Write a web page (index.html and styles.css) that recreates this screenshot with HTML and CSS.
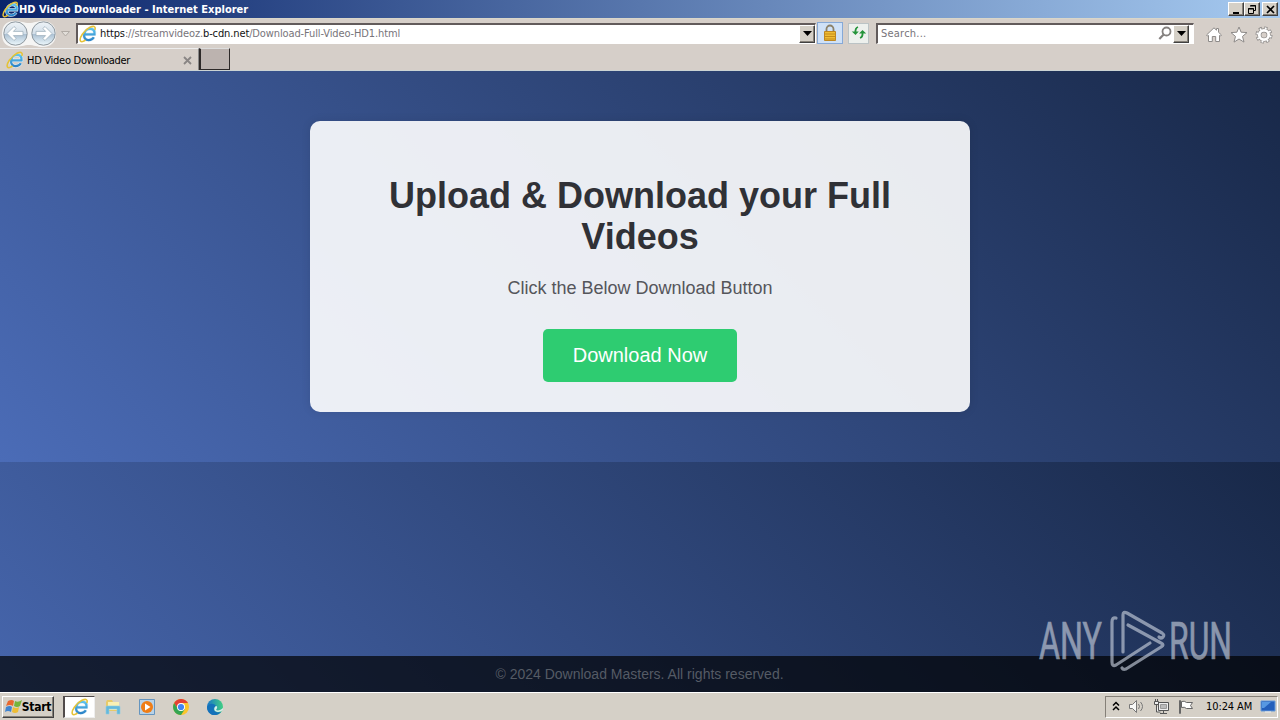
FILE: index.html
```html
<!DOCTYPE html>
<html lang="en"><head><meta charset="utf-8"><title>HD Video Downloader</title><link rel="stylesheet" href="styles.css"></head>
<body>
<svg class="defs" width="0" height="0" aria-hidden="true"><defs>
<linearGradient id="blue" x2="0" y2="1"><stop stop-color="#5cc3ee"/><stop offset="1" stop-color="#2c83c8"/></linearGradient>
<linearGradient id="nav" x2="0" y2="1"><stop stop-color="#eef3f7"/><stop offset=".5" stop-color="#d3dfe9"/><stop offset=".52" stop-color="#a9bfd2"/><stop offset="1" stop-color="#edf8fc"/></linearGradient>
<linearGradient id="edge" x2="1"><stop stop-color="#1976c8"/><stop offset="1" stop-color="#41cf83"/></linearGradient>
<symbol id="ie" viewBox="0 0 18 18"><g transform="translate(1.800 0) skewX(-8)"><path d="M5 9.300H15C15 5.900 13 3.900 10 3.900S4.700 6.200 4.700 9.500s2.100 5.600 5.300 5.600c2.300 0 4-1.100 4.800-2.800" fill="none" stroke="#e4f1f7" stroke-width="3.400"/><path d="M5 9.300H15C15 5.900 13 3.900 10 3.900S4.700 6.200 4.700 9.500s2.100 5.600 5.300 5.600c2.300 0 4-1.100 4.800-2.800" fill="none" stroke="url(#blue)" stroke-width="2.300"/></g><path d="M15.800 5C17 1.300 15 .5 11 2.300 5 5.300-.2 13.200 1.500 16c.9 1.200 3 .5 5-1" fill="none" stroke="#e5c238" stroke-width="1.600"/></symbol>
</defs></svg>
<header class="titlebar"><svg class="title-ie"><use href="#ie"/></svg><span class="title">HD Video Downloader - Internet Explorer</span>
<div class="window-buttons"><span class="bevel wb"><svg width="13" height="11"><path d="M3 8h6v2H3z"/></svg></span><span class="bevel wb"><svg width="13" height="11" fill="none" stroke="#000"><path d="M4.500 1.500h5v5h-2M4 2h6M2.500 4.500h5v5h-5zM2 5h6"/></svg></span><span class="bevel wb close"><svg width="13" height="11"><path d="M3 2l7 7M10 2L3 9" stroke="#000" stroke-width="1.700"/></svg></span></div></header>
<nav class="toolbar">
<svg class="nav-buttons" width="76" height="30" viewBox="0 0 76 30"><path d="M14 2C21 2 24 4 29 4s8-2 14-2c8 0 13 5 13 13s-5 13-13 13c-6 0-9-2-14-2s-8 2-15 2C6 28 2 23 2 15S6 2 14 2" fill="#f5f5f4"/><circle cx="15.500" cy="14.500" r="11.700" fill="url(#nav)" stroke="#8e989f"/><circle cx="43.500" cy="14.500" r="11.700" fill="url(#nav)" stroke="#8e989f"/><path d="M7 14.500l7-7 2.200 2-2.800 2.900H23v4.200h-9.600l2.800 2.900-2.200 2zM52 14.500l-7-7-2.200 2 2.800 2.900H36v4.200h9.600l-2.800 2.900 2.200 2z" fill="#fff" stroke="#a0b1bd" stroke-width=".8"/><path d="M61.500 12.500h8l-4 4.500z" fill="#e2ded9" stroke="#b1aba5"/></svg>
<div class="field address"><svg class="icon18"><use href="#ie"/></svg><span class="url"><b>https</b>://streamvideoz.<b>b-cdn.net</b>/Download-Full-Video-HD1.html</span><span class="bevel drop"><svg width="9" height="6"><path d="M0 0h9L4.500 5z"/></svg></span></div>
<span class="lock"><svg width="14" height="18" viewBox="0 0 14 18"><path d="M3.500 8V5a3.500 3.500 0 017 0v3" fill="none" stroke="#8c8168" stroke-width="1.800"/><path d="M1.500 7.500h11v9h-11z" fill="#efbd34" stroke="#bd8722"/><path d="M2 10h10M2 12.500h10M2 15h10" stroke="#c58b1c"/></svg></span>
<span class="refresh"><svg width="16" height="16" fill="none" stroke="#25943b" stroke-width="1.800"><path d="M7 2Q4 3 4.500 8M9 13Q12 12 11.500 7"/><path d="M.8 6.500h7L4.500 10zM8 8.500h7.200L11.500 5z" fill="#25943b" stroke="none"/></svg></span>
<div class="field search"><span>Search...</span><svg class="mag" width="14" height="15"><circle cx="8.500" cy="5.500" r="4" fill="none" stroke="#85817f" stroke-width="1.800"/><path d="M5.700 8.500L1.300 13" stroke="#85817f" stroke-width="2.200"/></svg><span class="bevel drop"><svg width="9" height="6"><path d="M0 0h9L4.500 5z"/></svg></span></div>
<div class="tools"><svg width="18" height="18"><path d="M1.500 9L9 1.800l2.500 2.400V2.500h2v3.800L16.500 9l-1 1-1-.6v6.100h-3.800v-5H7.300v5H3.500V9.400l-1 .6z" fill="#fff" stroke="#8e8b89"/></svg><svg width="18" height="18"><path d="M9 1l2.100 5.200 5.900.4-4.500 3.800 1.500 5.700-5-3.100-5 3.100 1.500-5.700L1 6.600l5.900-.4z" fill="#fff" stroke="#8e8b89"/></svg><svg width="18" height="18" fill="none"><circle cx="9" cy="9" r="7" stroke="#8e8b89" stroke-width="3" stroke-dasharray="3.200 2.298"/><circle cx="9" cy="9" r="4.700" stroke="#8e8b89" stroke-width="4.200"/><circle cx="9" cy="9" r="6.700" stroke="#fff" stroke-width="2" stroke-dasharray="1.800 3.462" stroke-dashoffset="-.6"/><circle cx="9" cy="9" r="4.700" stroke="#fff" stroke-width="2.800"/></svg></div>
</nav>
<div class="tabs"><div class="tab"><svg class="icon18"><use href="#ie"/></svg><span class="tab-title">HD Video Downloader</span><svg class="tab-x" width="9" height="9"><path d="M1 1l7 7M8 1L1 8" stroke="#898584" stroke-width="1.800"/></svg></div><span class="new-tab"></span></div>
<main class="page"><section class="card"><h1>Upload &amp; Download your Full Videos</h1><p>Click the Below Download Button</p><a class="download" href="#">Download Now</a></section><footer class="page-footer">© 2024 Download Masters. All rights reserved.</footer></main>
<svg class="watermark" width="210" height="74" viewBox="0 0 210 74"><g fill="#c4ccda" stroke="#c4ccda" stroke-width=".7"><text x="4" y="54" textLength="63" lengthAdjust="spacingAndGlyphs">ANY</text><text x="134" y="54" textLength="63" lengthAdjust="spacingAndGlyphs">RUN</text></g><g fill="none" stroke="#c4ccda" stroke-width="3.200" stroke-linejoin="round" stroke-linecap="round"><path d="M88 47V10q0-4 4-2l35 20q3 2 1 4t-4 0"/><path d="M81 13q-4-1-4 4v40q0 5 4 3l34-22"/><path d="M93 20l33 18q4 2 0 4L91 64q-3 1-4-1"/></g></svg>
<footer class="taskbar"><div class="bevel start"><svg width="18" height="18"><path d="M3 3q4-2 6 0L8 8Q5 6 1 8z" fill="#e8682f"/><path d="M10 3q3 2 7-1l-2 6q-3 2-6 0z" fill="#75b43b"/><path d="M1 9q4-2 6 0l-1 5q-3-2-6 0z" fill="#4084d0"/><path d="M8 9q3 2 6 0l-1 5q-3 2-6 0z" fill="#eebd36"/></svg><b>Start</b></div>
<div class="tasks"><span class="active"><svg class="icon18"><use href="#ie"/></svg></span>
<svg width="16" height="16"><path d="M1 3l1-2h5l1 2h6v9H1z" fill="#e8ca68"/><path d="M3 3h11v8H3z" fill="#faf0b3"/><path d="M1 15V8q0-1 1-1h12q1 0 1 1v7h-3v-5H4v5z" fill="#65b8db" stroke="#8ccce5" stroke-width=".6"/></svg>
<svg width="16" height="16"><path d="M.5.5h15v15H.5z" fill="#b8d2e7" stroke="#6595bf"/><circle cx="8" cy="8" r="6" fill="#ef7d16"/><path d="M6 4.500v7L11.500 8z" fill="#fff"/></svg>
<svg width="16" height="16"><circle cx="8" cy="8" r="8" fill="#fbc52c"/><path d="M1.100 4A8 8 0 0115 4H8L5 10z" fill="#e34135"/><path d="M1.100 4A8 8 0 008 16l4-6H5z" fill="#34a553"/><circle cx="8" cy="8" r="4" fill="#fff"/><circle cx="8" cy="8" r="3.100" fill="#4285f4"/></svg>
<svg width="16" height="16"><circle cx="8" cy="8" r="8" fill="url(#edge)"/><path d="M0 8C2 4 7 4 9 7c-3 1-3 5 0 6 2 1 4 0 5 0-5 6-14 3-14-5" fill="#1471ba"/><path d="M9 7c2 0 1 3 0 4 2 1 5 0 7-2v2q-2 2-5 2c-4 0-5-4-2-6" fill="#d7edeb"/></svg></div>
<div class="tray"><svg width="8" height="11" fill="none" stroke="#000" stroke-width="1.500"><path d="M1 4.500l3-3 3 3M1 9l3-3 3 3"/></svg><svg width="17" height="15" fill="#f8f8f7" stroke="#777"><path d="M1.500 5.500h3l4-4v12l-4-4h-3z"/><path d="M10.500 5q2 2.500 0 5M12.500 3q4 4.500 0 9" fill="none"/></svg><svg width="17" height="16" fill="#eee" stroke="#555"><path d="M5.500 3.500h10v8h-10zM7 14.500h7M10.500 12v2M1.500 2.500h4v3h-4zM2.500 0v2M4.500 0v2M3.500 6v7h4"/><path d="M7.500 5.500h6v4h-6z" fill="#bbb" stroke="#999"/></svg><svg width="16" height="15" fill="#fff" stroke="#666"><path d="M1.500 14.500V1.500h1v13zM3.500 2.500q3-1 5 1h6l-2 3 2 3h-6q-2-2-5-1z"/></svg><span class="clock">10:24 AM</span><svg width="16" height="13"><path d="M1 1h14v10H1z" fill="#245fbb" stroke="#679bda"/><path d="M2 2h9L4 8H2z" fill="#5798e2"/><path d="M5 12h6" stroke="#eee"/></svg></div></footer>
</body></html>
```
FILE: styles.css
```css
*{box-sizing:border-box}
body{margin:0;width:1280px;height:720px;overflow:hidden;display:flex;flex-direction:column;background:#d5d0c7;font:11px "DejaVu Sans Condensed","DejaVu Sans",sans-serif;position:relative}
svg{display:block;flex-shrink:0}
.defs{position:absolute}
.icon18{width:18px;height:18px}
.titlebar{height:18px;background:linear-gradient(90deg,#0a246a,#a6caf0);display:flex;align-items:center;padding:0 2px;color:#fff;font-weight:bold}
.title-ie{width:17px;height:17px}
.title{white-space:nowrap;letter-spacing:.02px}
.window-buttons{display:flex;margin-left:auto}
.bevel{background:#d5d0c7;border:1px solid;border-color:#fff #404040 #404040 #fff;box-shadow:inset -1px -1px #858078;display:flex;align-items:center;justify-content:center}
.wb{width:16px;height:14px}
.close{margin-left:2px}
.toolbar{height:30px;background:#d6cfc9;display:flex;align-items:center;border-top:1px solid #d9d6c9}
.field{height:21px;margin-bottom:1px;border:1px solid #fff;border-top:2px solid #625b5b;border-left:2px solid #625b5b;background:#fff;display:flex;align-items:center}
.address{width:740px;padding-left:1px;color:#77747a}
.url{margin-left:3px;white-space:nowrap;letter-spacing:-.12px}
.url b{font-weight:normal;color:#111}
.drop{width:16px;height:18px;margin-left:auto}
.lock{width:26px;height:22px;margin:0 0 1px 1px;border:1px solid #86a9d7;background:#cfe1f7;display:flex;align-items:center;justify-content:center}
.refresh{width:21px;height:21px;margin:0 0 1px 5px;border:1px solid #bbc3c5;background:#edf0ed;display:flex;align-items:center;justify-content:center}
.search{width:318px;margin-left:7px;padding:0 4px 0 3px;color:#77747a;letter-spacing:.22px}
.mag{margin-left:auto}
.mag+.drop{margin-left:1px}
.tools{display:flex;gap:7px;margin-left:11px;padding-top:3px}
.tabs{height:23px;background:#d6cfc9;display:flex;border-bottom:1px solid #cbd3d3}
.tab{width:199px;display:flex;align-items:center;padding:1px 6px 0;border-right:1px solid #888;border-top:1px solid #eee}
.tab-title{margin-left:3px;white-space:nowrap;letter-spacing:-.28px}
.tab-x{margin-left:auto}
.new-tab{width:31px;height:22px;border:1px solid #2d2928;border-width:0 1px 1px 2px;border-top:1px solid #ddd;background:#bcb3af}
.page{height:621px;position:relative;background:linear-gradient(45deg,#4b6cb7,#182848) 0 0/100% 391px;padding-top:50px;font-family:"Liberation Sans",Arial,sans-serif}
.card{width:660px;height:291px;margin:0 auto;border-radius:10px;background:rgba(255,255,255,.9);box-shadow:0 0 10px rgba(0,0,0,.1);padding:54px 30px 0;text-align:center}
.card h1{font-size:36px;line-height:41px;margin:0;color:#303136}
.card p{font-size:18px;line-height:21px;margin:21px 0 30px;color:#55565b}
.download{display:inline-flex;width:194px;height:52.5px;align-items:center;justify-content:center;border-radius:5px;background:#2ecc71;color:#fff;font-size:20px;text-decoration:none}
.page-footer{position:absolute;left:0;right:0;bottom:0;height:36px;padding-right:1px;background:rgba(0,0,0,.7);color:#555b65;font-size:14px;line-height:36px;text-align:center}
.watermark{position:absolute;left:1035px;top:605px;opacity:.65;font:52px Roboto,sans-serif}
.taskbar{height:28px;border-top:1px solid #fff;display:flex;align-items:center;padding:0 2px}
.start{width:52px;height:22px;font-size:12px}
.start b{letter-spacing:-.25px;margin-left:-1px}
.tasks{display:flex;align-items:center;gap:18px;margin-left:9px}
.active{width:32px;height:22px;margin-right:-8px;background:#fff;border:1px solid #eee;border-top-color:#514b4b;border-left:2px solid #514b4b;display:flex;align-items:center;justify-content:center}
.tray{width:173px;height:22px;margin-left:auto;display:flex;align-items:center;border:1px solid;border-color:#858078 #fff #fff #858078;padding-left:6px;gap:8px}
.clock{margin-left:4px;white-space:nowrap;letter-spacing:-.1px}
```
